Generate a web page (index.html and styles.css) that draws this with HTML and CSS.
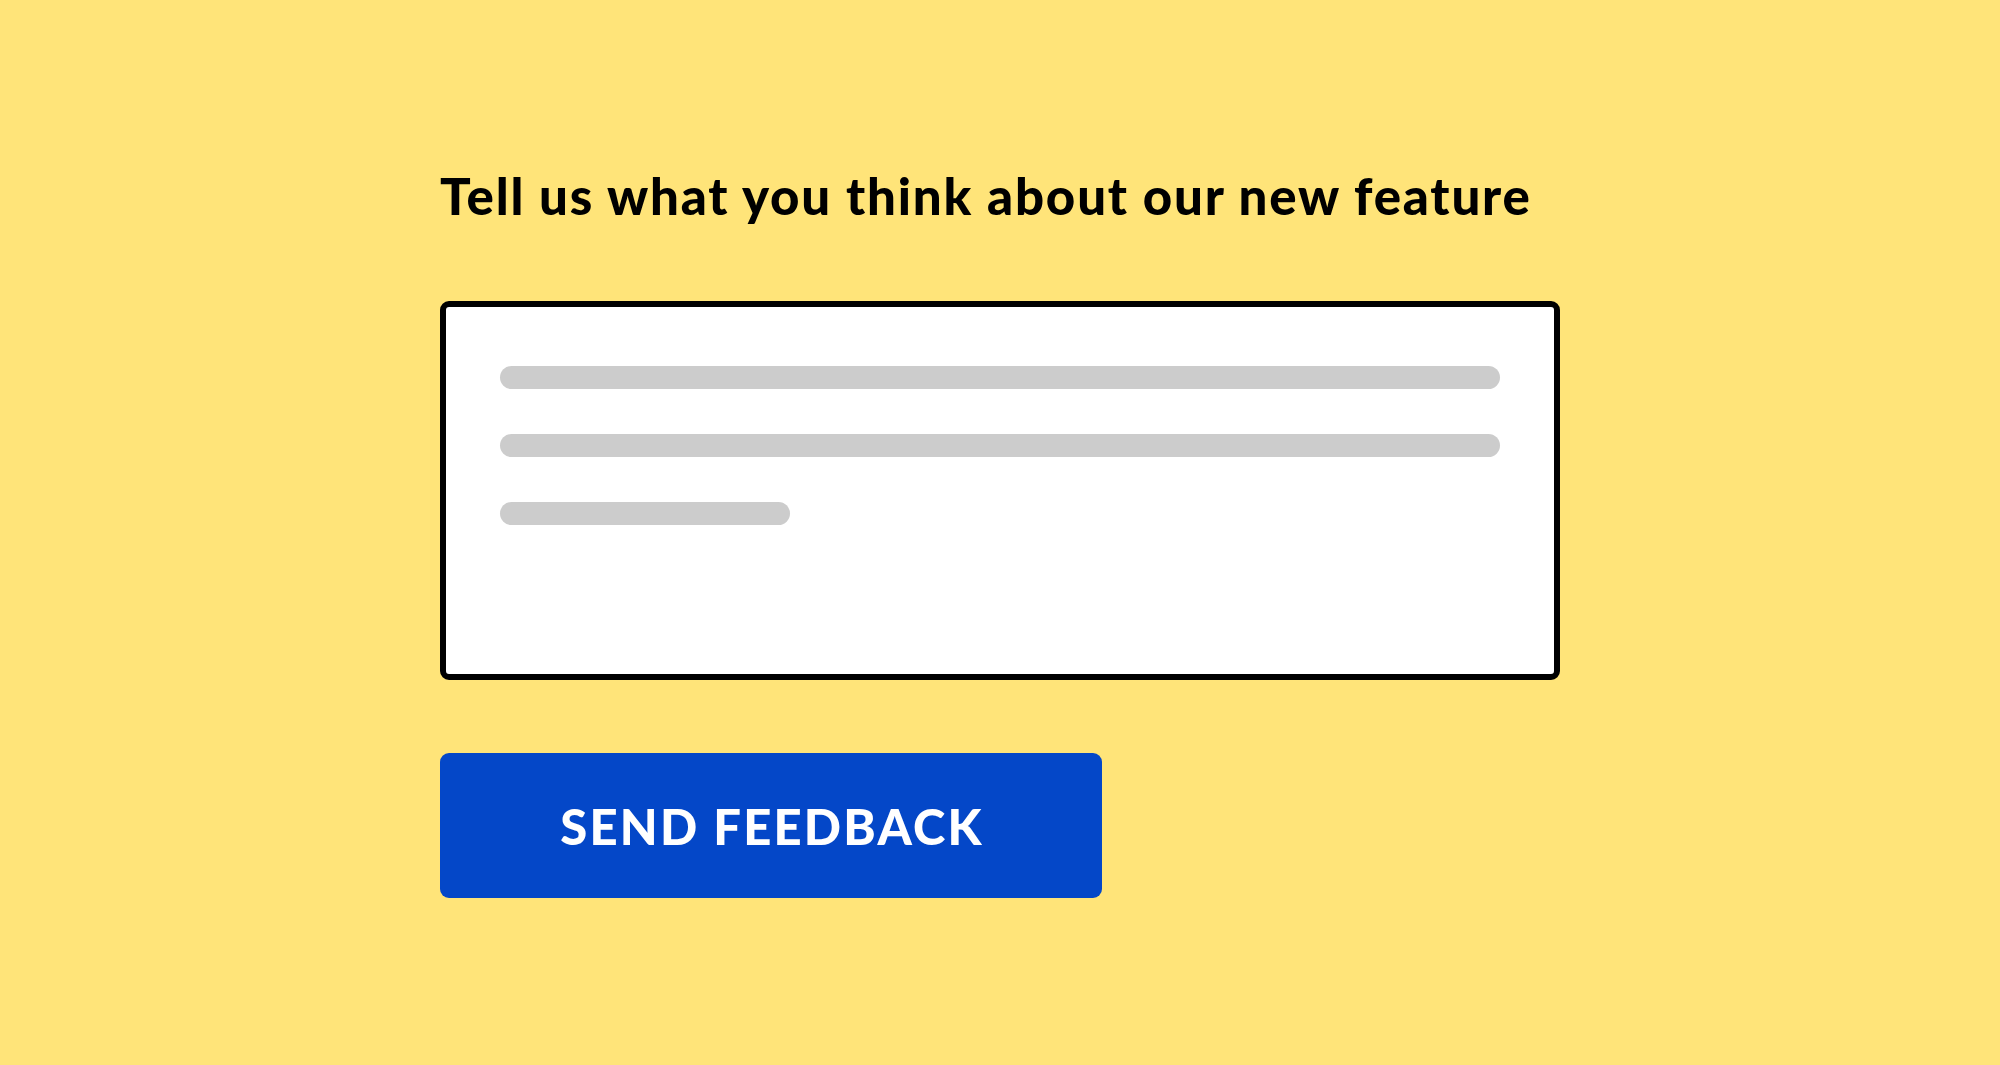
FILE: index.html
```html
<!DOCTYPE html>
<html lang="en">
<head>
<meta charset="utf-8">
<title>Feedback</title>
<link rel="stylesheet" href="styles.css">
</head>
<body>
<main class="page">
  <section class="feedback">
    <h1 class="title">Tell us what you think about our new feature</h1>
    <div class="textbox">
      <div class="line line-full"></div>
      <div class="line line-full"></div>
      <div class="line line-short"></div>
    </div>
    <button class="send" type="button">SEND FEEDBACK</button>
  </section>
</main>
</body>
</html>
```
FILE: styles.css
```css
html, body {
  margin: 0;
  padding: 0;
  background: #ffe479;
}
.page {
  width: 2000px;
  height: 1065px;
  box-sizing: border-box;
  padding: 160px 0 0 440px;
  font-family: Lato, "Noto Sans", sans-serif;
}
.feedback {
  display: flex;
  flex-direction: column;
  align-items: flex-start;
}
.title {
  margin: 0;
  font-size: 51px;
  font-weight: 900;
  line-height: 72px;
  letter-spacing: 1.8px;
  color: #000;
}
.textbox {
  margin-top: 69px;
  width: 1120px;
  height: 379px;
  box-sizing: border-box;
  border: 6px solid #000;
  border-radius: 9px;
  background: #fff;
  padding: 59px 54px 0 54px;
  display: flex;
  flex-direction: column;
  gap: 45px;
}
.line {
  height: 23px;
  border-radius: 12px;
  background: #cccccc;
}
.line-full { width: 1000px; }
.line-short { width: 290px; }
.send {
  margin-top: 73px;
  width: 662px;
  height: 145px;
  border: none;
  border-radius: 9px;
  background: #0447c8;
  color: #fff;
  font-family: Lato, "Noto Sans", sans-serif;
  font-weight: 900;
  font-size: 49px;
  letter-spacing: 2.2px;
  padding: 0 0 0 2px;
  cursor: pointer;
}
```
